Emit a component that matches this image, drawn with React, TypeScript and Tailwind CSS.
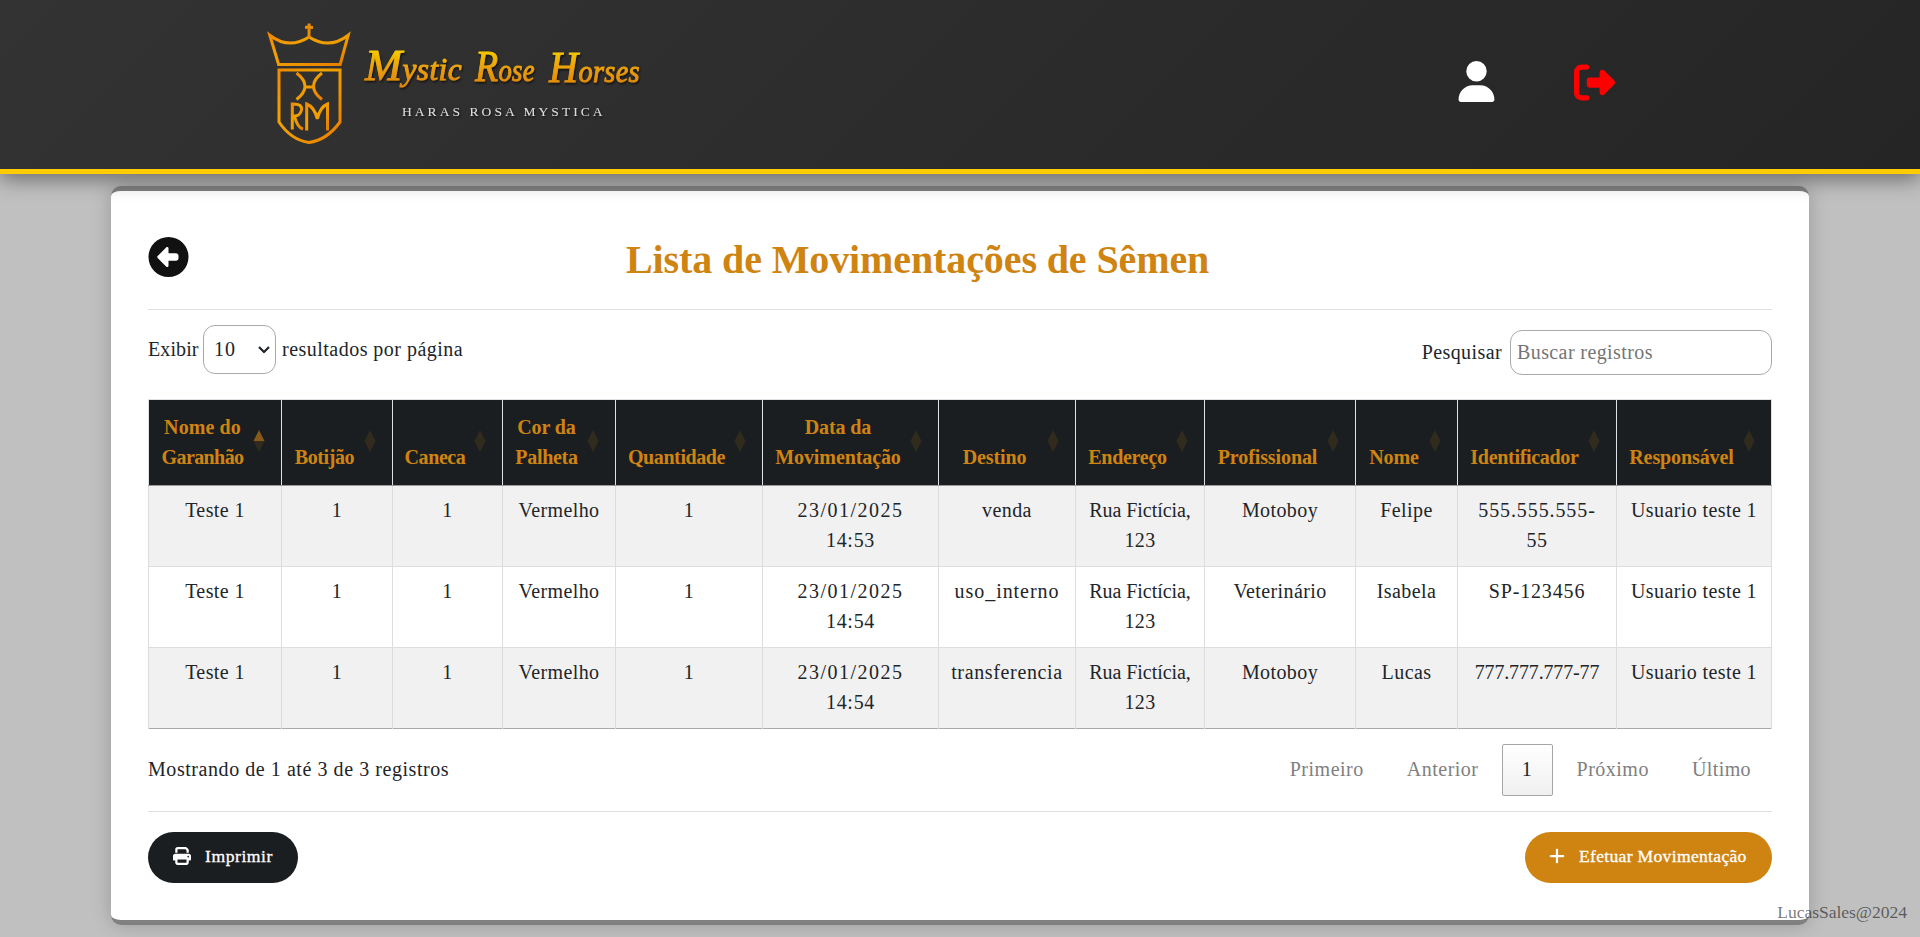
import React from "react";
import { FaCircleLeft, FaPlus, FaPrint, FaRightFromBracket, FaUser } from "react-icons/fa6";

type Column = { label: string[]; width: number };

const columns: Column[] = [
  { label: ["Nome do", "Garanhão"], width: 133 },
  { label: ["Botijão"], width: 111 },
  { label: ["Caneca"], width: 110 },
  { label: ["Cor da", "Palheta"], width: 113 },
  { label: ["Quantidade"], width: 147 },
  { label: ["Data da", "Movimentação"], width: 176 },
  { label: ["Destino"], width: 137 },
  { label: ["Endereço"], width: 129 },
  { label: ["Profissional"], width: 151 },
  { label: ["Nome"], width: 102 },
  { label: ["Identificador"], width: 159 },
  { label: ["Responsável"], width: 155 },
];

const rows: string[][][] = [
  [["Teste 1"], ["1"], ["1"], ["Vermelho"], ["1"], ["23/01/2025", "14:53"], ["venda"], ["Rua Fictícia,", "123"], ["Motoboy"], ["Felipe"], ["555.555.555-", "55"], ["Usuario teste 1"]],
  [["Teste 1"], ["1"], ["1"], ["Vermelho"], ["1"], ["23/01/2025", "14:54"], ["uso_interno"], ["Rua Fictícia,", "123"], ["Veterinário"], ["Isabela"], ["SP-123456"], ["Usuario teste 1"]],
  [["Teste 1"], ["1"], ["1"], ["Vermelho"], ["1"], ["23/01/2025", "14:54"], ["transferencia"], ["Rua Fictícia,", "123"], ["Motoboy"], ["Lucas"], ["777.777.777-77"], ["Usuario teste 1"]],
];

const tracking: Record<string, string> = {
  "Garanhão": "tracking-[-0.6px]",
  "Botijão": "tracking-[-0.4px]",
  "Caneca": "tracking-[-0.4px]",
  "Palheta": "tracking-[-0.3px]",
  "Quantidade": "tracking-[-0.4px]",
  "Endereço": "tracking-[-0.3px]",
  "Identificador": "tracking-[-0.3px]",
  "Nome do": "tracking-[0.1px]",
  "23/01/2025": "tracking-[1.5px]",
  "14:53": "tracking-[0.7px]",
  "14:54": "tracking-[0.7px]",
  "Rua Fictícia,": "tracking-[-0.05px]",
  "555.555.555-": "tracking-[0.9px]",
  "SP-123456": "tracking-[0.85px]",
  "777.777.777-77": "tracking-[-0.15px]",
  "uso_interno": "tracking-[0.95px]",
  "transferencia": "tracking-[0.65px]",
};

function Lines({ lines }: { lines: string[] }) {
  return (
    <>
      {lines.map((line) => (
        <span key={line} className={`block whitespace-nowrap ${tracking[line] ?? ""}`}>
          {line}
        </span>
      ))}
    </>
  );
}

function Logo() {
  return (
    <svg width="380" height="130" viewBox="265 15 380 130" className="block">
      <defs>
        <linearGradient id="crest" x1="0" y1="0" x2="1" y2="1">
          <stop offset="0" stopColor="#f08a00" />
          <stop offset="0.35" stopColor="#f2a200" />
          <stop offset="0.6" stopColor="#ee9800" />
          <stop offset="1" stopColor="#e87c00" />
        </linearGradient>
        <linearGradient id="script" gradientUnits="userSpaceOnUse" x1="0" y1="48" x2="0" y2="88">
          <stop offset="0" stopColor="#f7d000" />
          <stop offset="0.5" stopColor="#eba00a" />
          <stop offset="1" stopColor="#dd8208" />
        </linearGradient>
        <filter id="drop" x="-10%" y="-10%" width="120%" height="130%">
          <feDropShadow dx="1" dy="1.5" stdDeviation="0.8" floodColor="#000" floodOpacity="0.7" />
        </filter>
      </defs>
      <g fill="none" stroke="url(#crest)" strokeWidth="3" strokeLinejoin="miter">
        <path d="M269.800 35.200 Q289 50 309 37 Q329 50 348.200 35.200 L340.200 64.500 H278.600 Z" />
        <path d="M309.100 23.500 L309 38 M305 27.300 L313 27.400" stroke="#ea8c06" />
        <path d="M279 70 H340 V122 Q327 140 309 142.500 Q291 140 279 122 Z" />
        <path d="M296.500 73 Q313.500 86 296.500 99.500 M322 73 Q305 86 322 99.500 M305 87 H314" />
        <path d="M292.300 129.500 V104 Q302.500 103.500 301.500 110 Q300 116 294.500 116 Q297 127 303 129.200" />
        <path d="M306.700 130.500 V104 Q314.500 107 317.300 119 Q320 107 327.500 104 V130.500" />
      </g>
      <g
        fill="url(#script)"
        stroke="url(#script)"
        strokeWidth="0.9"
        fontFamily='"Liberation Serif", serif'
        fontStyle="italic"
        fontSize="31"
        filter="url(#drop)"
      >
        <text x="365" y="80" textLength="97" lengthAdjust="spacingAndGlyphs">
          <tspan fontSize="44">M</tspan>ystic
        </text>
        <text x="475" y="81" textLength="60" lengthAdjust="spacingAndGlyphs">
          <tspan fontSize="44">R</tspan>ose
        </text>
        <text x="549" y="81.500" textLength="91" lengthAdjust="spacingAndGlyphs">
          <tspan fontSize="44">H</tspan>orses
        </text>
      </g>
      <text x="402" y="116" textLength="201" fill="#dcdcdc" fontFamily='"Liberation Serif", serif' fontSize="13.500" filter="url(#drop)">
        HARAS ROSA MYSTICA
      </text>
    </svg>
  );
}

function SortIcon({ active }: { active: boolean }) {
  return (
    <svg width="12" height="22" viewBox="0 0 12 22" className="absolute right-[16px] top-[30px]">
      <path d="M6 0 L11.500 11 H0.500 Z" fill="#cf8412" fillOpacity={active ? 0.6 : 0.125} />
      <path d="M6 22 L11.500 11 H0.500 Z" fill="#cf8412" fillOpacity="0.125" />
    </svg>
  );
}

export default function App() {
  return (
    <div className="relative flex h-[937px] w-full flex-col overflow-hidden bg-[#c0c0c0] font-['Liberation_Serif',serif] text-[20px] leading-[30px] tracking-[0.4px] text-[#212529]">
      <header className="relative z-10 flex h-[174px] shrink-0 items-start justify-between border-b-[5px] border-[#ffcc00] bg-linear-[135deg,#333333,#252525] pl-[265px] pr-[305px] shadow-[0_5px_20px_rgba(0,0,0,0.45)]">
        <div className="pt-[15px]">
          <Logo />
        </div>
        <nav className="flex gap-[79px] pt-[61px]">
          <FaUser className="h-[41px] w-[37px] text-white" />
          <FaRightFromBracket className="mt-[1px] h-[41px] w-[41px] text-[#ff0000]" />
        </nav>
      </header>

      <main className="ml-[111px] mt-3 flex h-[739px] w-[1698px] shrink-0 flex-col rounded-[10px] border-y-[5px] border-[#808080] bg-white px-[37px] shadow-[0_0_20px_rgba(0,0,0,0.2)]">
        <div className="flex h-[119px] shrink-0 items-start border-b border-[#dfe0e1] pt-[46px]">
          <FaCircleLeft className="h-[40px] w-[41px] text-[#111111]" />
          <h1 className="ml-[437px] mt-[-1px] whitespace-nowrap text-[40px] font-bold leading-[48px] tracking-[-0.11px] text-[#cf8412]">
            Lista de Movimentações de Sêmen
          </h1>
        </div>

        <div className="flex h-[89px] shrink-0 items-start justify-between">
          <div className="flex items-center pt-[15px]">
            <span className="w-[55px] pb-[2px] tracking-[0.1px]">Exibir</span>
            <div className="flex h-[49px] w-[73px] items-center justify-between rounded-xl border border-[#aaaaaa] pl-[10px] pr-[5px]">
              <span className="pb-[1px] tracking-[1px]">10</span>
              <svg width="12" height="8" viewBox="0 0 12 8" fill="none" stroke="#212529" strokeWidth="2.200">
                <path d="M1 1 L6 6 L11 1" />
              </svg>
            </div>
            <span className="ml-[6px] pb-[2px] tracking-[0.48px]">resultados por página</span>
          </div>
          <label className="flex items-center pt-5">
            <span className="pb-[2px]">Pesquisar</span>
            <input
              placeholder="Buscar registros"
              className="ml-2 h-[45px] w-[262px] rounded-xl border border-[#aaaaaa] bg-transparent px-[6px] tracking-[0.4px] placeholder:text-[#757575]"
            />
          </label>
        </div>

        <table className="w-[1624px] shrink-0 table-fixed border-collapse text-center">
          <colgroup>
            {columns.map((column, index) => (
              <col key={index} style={{ width: column.width }} />
            ))}
          </colgroup>
          <thead>
            <tr className="h-[86px] bg-[#1b1e21] text-[#cf8412]">
              {columns.map((column, index) => (
                <th key={index} className="relative border border-[#dee2e6] border-b-[#999999] pb-[13px] pl-[10px] pr-[35px] align-bottom font-bold tracking-[-0.1px]">
                  <Lines lines={column.label} />
                  <SortIcon active={index === 0} />
                </th>
              ))}
            </tr>
          </thead>
          <tbody>
            {rows.map((row, rowIndex) => (
              <tr key={rowIndex} className="h-[81px] odd:bg-[#f1f1f1] last:border-b last:border-[#aaaaaa]">
                {row.map((cell, index) => (
                  <td key={index} className={rowIndex === 2 ? "border-x border-[#dddddd] px-0 pt-[9px] align-top" : "border-x border-b border-[#dddddd] px-0 pt-[9px] align-top"}>
                    <Lines lines={cell} />
                  </td>
                ))}
              </tr>
            ))}
          </tbody>
        </table>

        <div className="flex h-[83px] shrink-0 items-start justify-between border-b border-[#dfe0e1] pt-[15px]">
          <span className="mt-[10px] tracking-[0.56px]">Mostrando de 1 até 3 de 3 registros</span>
          <div className="flex items-center text-[#808080]">
            <span className="mr-[43px] pb-[2px] tracking-[0.5px]">Primeiro</span>
            <span className="mr-[23px] pb-[2px] tracking-[0.5px]">Anterior</span>
            <span className="flex h-[52px] w-[51px] items-center justify-center rounded-[2px] border border-[#a6a6a6] bg-linear-to-b from-white to-[#f0f0f0] pb-[2px] text-[#212529]">1</span>
            <span className="ml-[24px] pb-[2px] tracking-[0.5px]">Próximo</span>
            <span className="ml-[43px] mr-[21px] pb-[2px]">Último</span>
          </div>
        </div>

        <div className="flex justify-between pt-5 text-[17.6px] text-white">
          <button className="flex h-[51px] w-[150px] items-center rounded-full bg-[#1b1e21] pl-[25px] pb-[4px]">
            <FaPrint className="size-[18px]" />
            <span className="ml-[14px] tracking-[0.55px] [-webkit-text-stroke:0.3px_white]">Imprimir</span>
          </button>
          <button className="flex h-[51px] w-[247px] items-center rounded-full bg-[#cf8412] pl-[23px] pb-[4px]">
            <FaPlus className="size-[18px]" />
            <span className="ml-[13px] whitespace-nowrap tracking-[0.3px] [-webkit-text-stroke:0.3px_white]">Efetuar Movimentação</span>
          </button>
        </div>
      </main>

      <footer className="absolute bottom-[10px] right-[13px] text-[17.6px] tracking-[-0.05px] text-black/55">LucasSales@2024</footer>
    </div>
  );
}
